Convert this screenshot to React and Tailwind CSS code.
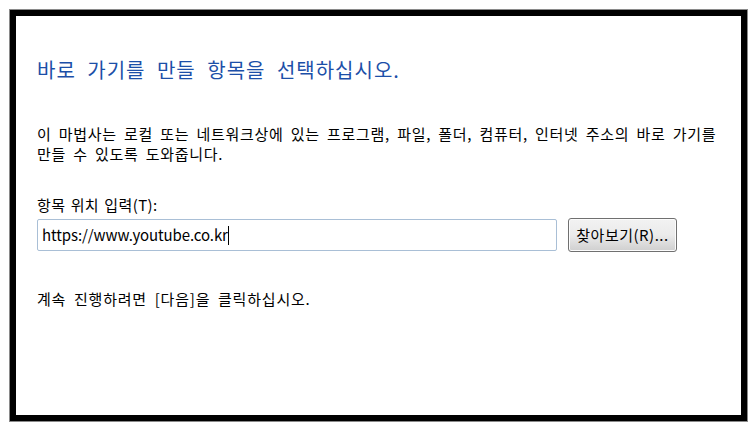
import React from "react";

export default function App() {
  return (
    <div className="w-[755px] h-[431px] bg-white pt-[10px] pl-[10px]">
      <div
        className="w-[737px] h-[411px] border-[6px] border-black outline outline-1 outline-[#8a8a8a] bg-white pl-[21px] pt-[40px] text-black"
        style={{ fontFamily: '"Noto Sans CJK KR", "Noto Sans", sans-serif' }}
      >
        <h1 className="text-[20px] leading-[28px] tracking-[1px] [word-spacing:6px] text-[#1c4fa8]">
          바로 가기를 만들 항목을 선택하십시오.
        </h1>

        <p className="mt-[40px] text-[15px] leading-[20px] tracking-[0.7px] [word-spacing:3.2px]">
          이 마법사는 로컬 또는 네트워크상에 있는 프로그램, 파일, 폴더, 컴퓨터, 인터넷 주소의 바로 가기를
          <br />
          만들 수 있도록 도와줍니다.
        </p>

        <div className="mt-[32px] text-[15px] leading-[18px] tracking-[0.4px] [word-spacing:1.5px]">
          항목 위치 입력(T):
        </div>

        <div className="mt-[4px] flex items-center gap-[11px]">
          <div className="w-[520px] h-[32px] border border-[#a9bfd6] rounded-[2px] flex items-center px-[4px] text-[15px] tracking-[-0.1px]">
            <span>https://www.youtube.co.kr</span>
            <span className="w-px h-[19px] bg-black" />
          </div>
          <button className="w-[109px] h-[34px] rounded-[3px] border border-[#707070] bg-gradient-to-b from-[#f2f2f2] via-[#ebebeb] to-[#cfcfcf] text-[15px] tracking-[0.5px] shadow-[inset_0_0_0_1px_#fcfcfc]">
            찾아보기(R)...
          </button>
        </div>

        <p className="mt-[37px] text-[15px] leading-[20px] tracking-[0.8px] [word-spacing:3.6px]">
          계속 진행하려면 [다음]을 클릭하십시오.
        </p>
      </div>
    </div>
  );
}
